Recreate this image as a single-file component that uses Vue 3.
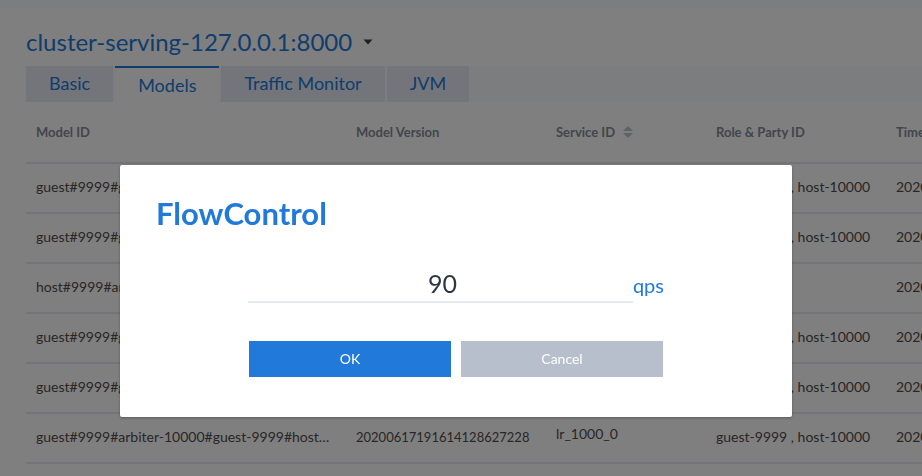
<script setup>
import { ref } from 'vue'

const clusters = ['cluster-serving-127.0.0.1:8000']
const cluster = ref(clusters[0])

const tabs = ['Basic', 'Models', 'Traffic Monitor', 'JVM']
const activeTab = ref('Models')

const guestModel = 'guest#9999#guest-9999#host-10000#model'
const both = 'guest-9999 , host-10000'

const rows = [
  { id: guestModel, version: '20200617191614128627228', service: '', role: both, time: '2020-06-17' },
  { id: guestModel, version: '20200617191614128627228', service: '', role: both, time: '2020-06-17' },
  { id: 'host#9999#arbiter-10000#guest-9999#host-10000', version: '20200617191614128627228', service: '', role: 'host-10000', time: '2020-06-17' },
  { id: guestModel, version: '20200617191614128627228', service: '', role: both, time: '2020-06-17' },
  { id: guestModel, version: '20200617191614128627228', service: '', role: both, time: '2020-06-17' },
  { id: 'guest#9999#arbiter-10000#guest-9999#host-10000#model', version: '20200617191614128627228', service: 'lr_1000_0', role: both, time: '2020-06-17' },
]

const qps = ref('90')
const open = ref(true)
</script>

<template>
  <div class="page">
    <main class="panel">
      <div class="cluster">
        <select v-model="cluster" class="cluster-select" aria-label="Cluster">
          <option v-for="name in clusters" :key="name" :value="name">{{ name }}</option>
        </select>
        <svg class="caret" viewBox="0 0 10 6" aria-hidden="true"><path d="M0.5 0.5h9L5 5.5z" /></svg>
      </div>

      <nav class="tabs">
        <button
          v-for="tab in tabs"
          :key="tab"
          type="button"
          class="tab"
          :class="{ active: tab === activeTab }"
          @click="activeTab = tab"
        >{{ tab }}</button>
      </nav>

      <div class="table-wrap">
        <table class="models">
          <colgroup>
            <col class="col-id" />
            <col class="col-version" />
            <col class="col-service" />
            <col class="col-role" />
            <col />
          </colgroup>
          <thead>
            <tr>
              <th>Model ID</th>
              <th>Model Version</th>
              <th>
                <button type="button" class="sort">
                  Service ID
                  <svg class="sort-icon" viewBox="0 0 10 12" aria-hidden="true">
                    <path d="M0 5h10L5 0z" />
                    <path d="M0 7h10L5 12z" />
                  </svg>
                </button>
              </th>
              <th>Role &amp; Party ID</th>
              <th>Timestamp</th>
            </tr>
          </thead>
          <tbody>
            <tr v-for="(row, i) in rows" :key="i">
              <td class="id">{{ row.id }}</td>
              <td class="version">{{ row.version }}</td>
              <td class="service">{{ row.service }}</td>
              <td>{{ row.role }}</td>
              <td>{{ row.time }}</td>
            </tr>
          </tbody>
        </table>
      </div>
    </main>

    <div v-if="open" class="overlay">
      <form class="dialog" role="dialog" aria-labelledby="dialog-title" @submit.prevent="open = false">
        <h2 id="dialog-title" class="dialog-title">FlowControl</h2>
        <div class="dialog-body">
          <div class="field">
            <input id="qps" v-model="qps" class="field-input" type="text" />
            <label for="qps" class="unit">qps</label>
          </div>
          <div class="actions">
            <button type="submit" class="action ok">OK</button>
            <button type="button" class="action cancel" @click="open = false">Cancel</button>
          </div>
        </div>
      </form>
    </div>
  </div>
</template>

<style>
body {
  margin: 0;
  background: #ffffff;
}
</style>

<style scoped>
.page,
.page button,
.page input,
.page select {
  font-family: Lato, "Liberation Sans", sans-serif;
}

.page {
  height: 100vh;
  overflow: hidden;
  color: #534c4c;
  background: #ffffff;
  border-top: 8px solid #f8fafd;
  box-sizing: border-box;
}

.panel {
  padding: 18px 0 0 26px;
}

.cluster {
  display: flex;
  align-items: center;
  gap: 10px;
  height: 32px;
}

.cluster-select {
  appearance: none;
  border: 0;
  padding: 0;
  background: none;
  color: #217ad9;
  font-size: 24px;
  line-height: 32px;
}

.caret {
  width: 10px;
  height: 6px;
  fill: #3e3e42;
}

.tabs {
  display: flex;
  gap: 2px;
  margin-top: 8px;
  background: #f8fafd;
}

.tab {
  height: 36px;
  padding: 0 23px 2px;
  border: 0;
  background: #e8ebf4;
  color: #217ad9;
  font-size: 18px;
  line-height: 34px;
}

.tab.active {
  padding-bottom: 0;
  border-top: 2px solid #217ad9;
  background: #ffffff;
}

.table-wrap {
  overflow: hidden;
}

.models {
  table-layout: fixed;
  width: 100%;
  min-width: 1060px;
  border-collapse: separate;
  border-spacing: 0;
  font-size: 14px;
  line-height: 20px;
}

.col-id {
  width: 320px;
}

.col-version {
  width: 200px;
}

.col-service {
  width: 160px;
}

.col-role {
  width: 180px;
}

.models th,
.models td {
  box-sizing: border-box;
  height: 50px;
  padding: 0 10px 2px;
  border-bottom: 2px solid #e6e6f0;
  text-align: left;
  white-space: nowrap;
  overflow: hidden;
  text-overflow: ellipsis;
}

.models th {
  height: 62px;
  padding-bottom: 0;
  color: #848c99;
  font-size: 13px;
  font-weight: 700;
}

.models .id {
  padding-right: 14px;
}

.models .version {
  font-size: 13px;
}

.models .service {
  padding-bottom: 8px;
}

.sort {
  display: flex;
  align-items: center;
  gap: 8px;
  padding: 0;
  border: 0;
  background: none;
  color: inherit;
  font-size: 13px;
  font-weight: 700;
  line-height: 20px;
}

.sort-icon {
  width: 10px;
  height: 12px;
  fill: #c0c4cc;
}

.overlay {
  position: fixed;
  inset: 0;
  display: flex;
  align-items: flex-start;
  justify-content: center;
  padding: 165px 10px 0 0;
  background: rgba(0, 0, 0, 0.5);
}

.dialog {
  box-sizing: border-box;
  width: 100%;
  max-width: 672px;
  padding: 28px 36px 40px;
  border-radius: 2px;
  background: #ffffff;
  box-shadow: 0 1px 3px rgba(0, 0, 0, 0.3);
}

.dialog-title {
  margin: 0;
  color: #217ad9;
  font-size: 31px;
  font-weight: 700;
  line-height: 40px;
}

.dialog-body {
  padding: 32px 92px 0;
}

.field {
  display: flex;
  align-items: center;
}

.field-input {
  flex: 1;
  box-sizing: border-box;
  min-width: 0;
  height: 38px;
  padding: 0 0 0 4px;
  border: 0;
  border-bottom: 2px solid #e6ebf0;
  background: none;
  color: #2d3642;
  font-size: 25px;
  text-align: center;
  outline: none;
}

.unit {
  padding-top: 2px;
  color: #217ad9;
  font-size: 20px;
  line-height: 24px;
}

.actions {
  display: flex;
  gap: 10px;
  margin-top: 38px;
  padding: 0 1px;
}

.action {
  flex: 1;
  height: 36px;
  padding: 0 0 2px;
  border: 0;
  color: #ffffff;
  font-size: 14px;
}

.ok {
  background: #217ad9;
}

.cancel {
  background: #b8bfcc;
}
</style>
